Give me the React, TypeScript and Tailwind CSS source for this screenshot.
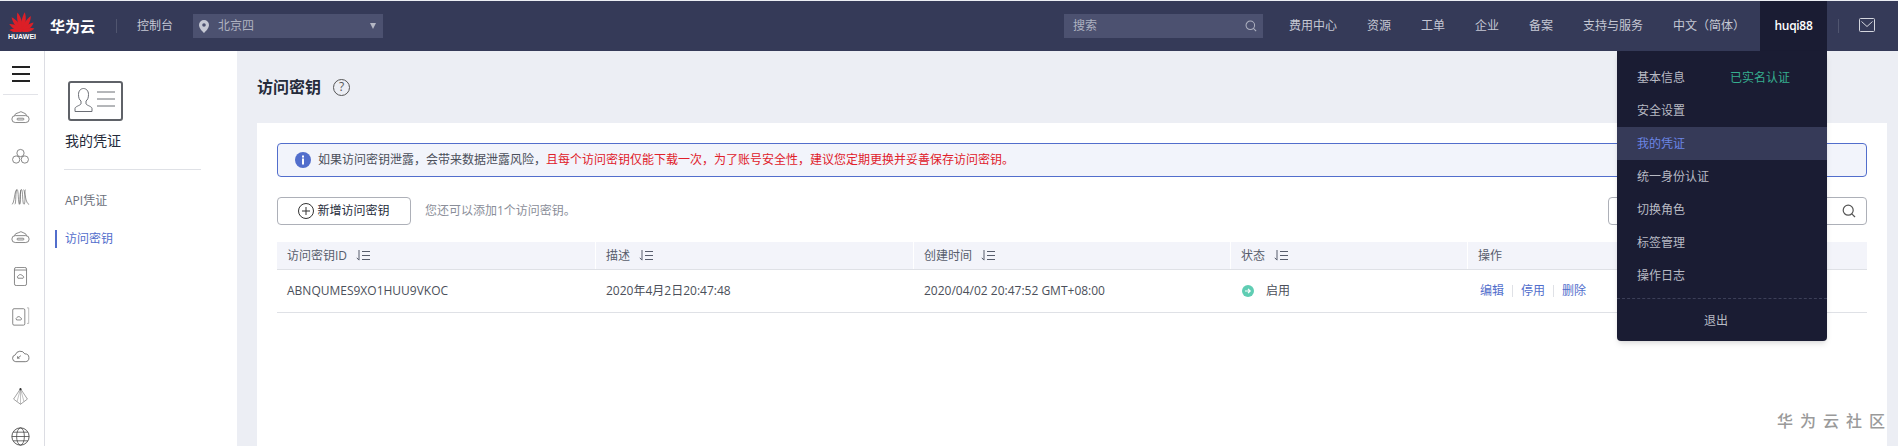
import React from "react";

const FONT = "font-['Open_Sans','Noto_Sans_CJK_SC',sans-serif]";

function HuaweiLogo() {
  const petals = [
    { a: -80, s: 0.85 },
    { a: -56, s: 0.98 },
    { a: -33, s: 1.18 },
    { a: -11, s: 1.3 },
    { a: 11, s: 1.3 },
    { a: 33, s: 1.18 },
    { a: 56, s: 0.98 },
    { a: 80, s: 0.85 },
  ];
  return (
    <svg width="26" height="21" viewBox="0 0 26 21">
      {petals.map((p) => (
        <path
          key={p.a}
          d="M0 0C-3 -4 -3.200 -10 -1 -15C2.200 -11 2.800 -4 0 0Z"
          fill="#dc1f27"
          transform={`translate(13 20.500) rotate(${p.a}) scale(${p.s > 1 ? 1 : p.s} ${p.s})`}
        />
      ))}
    </svg>
  );
}

function PinIcon() {
  return (
    <svg width="10" height="13" viewBox="0 0 10 13">
      <path
        d="M5 0a5 5 0 0 1 5 5c0 3-3 6-5 8-2-2-5-5-5-8a5 5 0 0 1 5-5zm0 3.200a1.800 1.800 0 1 0 0 3.600a1.800 1.800 0 0 0 0-3.600z"
        fill="#c5c8d4"
        fillRule="evenodd"
      />
    </svg>
  );
}

function SearchIcon({ color, size }: { color: string; size: number }) {
  return (
    <svg width={size} height={size} viewBox="0 0 14 14" fill="none" stroke={color} strokeWidth="1.2">
      <circle cx="6.200" cy="6.200" r="5" />
      <path d="M9.800 9.800L13 13" />
    </svg>
  );
}

function SortIcon() {
  return (
    <svg width="15" height="11" viewBox="0 0 15 11" fill="none" stroke="#575d6c" strokeWidth="1">
      <path d="M3 0v10M.8 7.800L3 10.200" />
      <path d="M6 1.500h8M6 5.500h8M6 9.500h8" />
    </svg>
  );
}

const cloud = "M5 15a4 4 0 0 1 -.5 -7.900a6 6 0 0 1 11 -1.100a4.500 4.500 0 0 1 .5 9z";

function RailIcon({ kind }: { kind: number }) {
  return (
    <svg width="19" height="19" viewBox="0 0 22 22" fill="none" stroke="#666" strokeWidth="0.9">
      {kind === 0 && (
        <g>
          <path d="M4 10a7 4 0 0 1 5-3.500a3.500 3 0 0 1 5 0a7 4 0 0 1 4 3.500" />
          <rect x="1" y="10" width="20" height="8" rx="4" />
          <rect x="7" y="13" width="8" height="2" rx="1" />
        </g>
      )}
      {kind === 1 && (
        <g>
          <circle cx="11" cy="7" r="4.200" />
          <circle cx="6" cy="14.500" r="4.200" />
          <circle cx="16" cy="14.500" r="4.200" />
        </g>
      )}
      {kind === 2 && (
        <path d="M1 20C4 20 4 3 7 3C9 3 8 20 10 20C11.500 20 10 3 12 3C14 3 13 20 15 20C17 20 16 3 14.500 3M7 3C5 3 6 20 4.500 20M12 3C10 3 11 20 9.500 20M17 3C15 3 17 20 21 20" strokeWidth="0.8" />
      )}
      {kind === 3 && (
        <g>
          <rect x="4" y="0.500" width="14" height="21" rx="2" />
          <path d="M4 3.500h14" />
          <path d="M8 13a2 2 0 0 1 .5 -3a3 3 0 0 1 5 .3a1.500 1.500 0 0 1 .5 2.700z" />
        </g>
      )}
      {kind === 4 && (
        <g>
          <rect x="2" y="2" width="14" height="19" rx="1.500" />
          <path d="M18.500 1h2v18h-2" stroke="#aaa" />
          <path d="M6.500 15a2 2 0 0 1 .5 -3a2.500 2.500 0 0 1 4 .3a1.500 1.500 0 0 1 .5 2.700z" />
        </g>
      )}
      {kind === 5 && (
        <g>
          <path d={cloud} transform="translate(0.500 2)" strokeWidth="1" />
          <path d="M7.500 13l4 -3M7.500 13l.3 -2.500M7.500 13h2.500" />
        </g>
      )}
      {kind === 6 && (
        <g>
          <path d="M11 2L3 14l8 6 8-6z" stroke="#888" />
          <path d="M11 2v18M11 2L7 17M11 2l4 15" strokeWidth="0.6" stroke="#888" />
          <circle cx="11" cy="2.500" r="1.200" fill="#333" stroke="none" />
        </g>
      )}
      {kind === 7 && (
        <g stroke="#444">
          <circle cx="11" cy="11" r="10" strokeWidth="1" />
          <ellipse cx="11" cy="11" rx="4.500" ry="10" />
          <path d="M1 11h20M2.500 6h17M2.500 16h17" />
        </g>
      )}
    </svg>
  );
}

function CardIcon() {
  return (
    <svg width="55" height="40" viewBox="0 0 55 40" fill="none">
      <rect x="1" y="1" width="53" height="38" rx="2" stroke="#5f6268" strokeWidth="2" />
      <path
        d="M7 30.500v-3c0-2 5-3 6-4.500v-3c-1.500-1-2.500-3-2.500-6.500c0-4 2.500-6 5-6s5 2 5 6c0 3.500-1 5.500-2.500 6.500v3c1 1.500 6 2.500 6 4.500v3z"
        stroke="#6b6e75"
        strokeWidth="1"
      />
      <path d="M29 11h18M29 18h18M29 25h18" stroke="#6b6e75" strokeWidth="1" />
    </svg>
  );
}

const navItems = ["费用中心", "资源", "工单", "企业", "备案", "支持与服务"];
const railKinds = [0, 1, 2, 0, 3, 4, 5, 6, 7];
const menuItems = ["安全设置", "我的凭证", "统一身份认证", "切换角色", "标签管理", "操作日志"];

const columns = [
  { title: "访问密钥ID", sort: true },
  { title: "描述", sort: true },
  { title: "创建时间", sort: true },
  { title: "状态", sort: true },
  { title: "操作", sort: false },
];

function TopBar() {
  return (
    <header className="h-[50px] shrink-0 bg-[#353a58] flex items-center text-xs text-[#c5c8d4]">
      <div className="w-[26px] ml-[9px] flex flex-col items-center">
        <HuaweiLogo />
        <span className="font-['Liberation_Sans',sans-serif] text-[7px] leading-[8px] font-bold text-white mt-px">
          HUAWEI
        </span>
      </div>
      <span className="ml-[15px] text-[15px] font-bold text-white">华为云</span>
      <span className="ml-[21px] h-[14px] w-px bg-[#50556f]" />
      <span className="ml-5">控制台</span>
      <div className="ml-5 w-[190px] h-[24px] bg-[#4c5170] flex items-center pl-[6px] pr-[7px] text-[#aeb1c0]">
        <PinIcon />
        <span className="ml-[9px] flex-1">北京四</span>
        <span className="w-0 h-0 border-x-[3.5px] border-x-transparent border-t-[6px] border-t-[#b4b7c4]" />
      </div>
      <div className="ml-auto w-[199px] h-[24px] bg-[#4c5170] flex items-center justify-between pl-[9px] pr-[6px] text-[#aeb1c0]">
        <span>搜索</span>
        <SearchIcon color="#aeb1c0" size={12} />
      </div>
      <nav className="ml-[26px] flex gap-[30px]">
        {navItems.map((n) => (
          <span key={n}>{n}</span>
        ))}
        <span className="w-[87px]">中文（简体）</span>
      </nav>
      <div className="w-[67px] h-[50px] bg-[#1a1c33] flex items-center justify-center text-white font-semibold tracking-[-0.3px]">
        huqi88
      </div>
      <span className="ml-[11px] w-px h-[14px] bg-[#50556f]" />
      <svg className="ml-5 -mt-[2px]" width="16" height="14" viewBox="0 0 16 14" fill="none" stroke="#d4d6de" strokeWidth="1">
        <rect x="0.500" y="0.500" width="15" height="13" rx="1" />
        <path d="M2.500 3.500L8 8.500l5.500-5" />
      </svg>
      <span className="w-[23px]" />
    </header>
  );
}

function UserMenu() {
  return (
    <div className="absolute left-[1617px] top-[51px] w-[210px] h-[290px] bg-[#1a1c33] rounded-b-sm shadow-md text-xs text-[#b8bac4] pt-[10px]">
      <div className="h-[33px] flex items-center pl-5">
        <span className="w-[93px]">基本信息</span>
        <span className="text-[#36ae8f]">已实名认证</span>
      </div>
      {menuItems.map((m) => (
        <div
          key={m}
          className={
            m === "我的凭证"
              ? "h-[33px] flex items-center pl-5 bg-[#363a58] text-[#6c86e6]"
              : "h-[33px] flex items-center pl-5"
          }
        >
          {m}
        </div>
      ))}
      <div className="mt-[6px] border-t border-dashed border-[#3c3f58] h-[44px] flex items-center pl-[87px]">退出</div>
    </div>
  );
}

function Sidebar() {
  return (
    <>
      <div className="w-[45px] shrink-0 bg-white border-r border-[#dcdde3] flex flex-col items-center">
        <div className="h-[46px] w-[35px] -ml-[3px] pt-[2px] border-b border-[#e2e3e8] flex flex-col items-center justify-center gap-[5px]">
          <span className="w-[18px] h-[2px] bg-[#222]" />
          <span className="w-[18px] h-[2px] bg-[#222]" />
          <span className="w-[18px] h-[2px] bg-[#222]" />
        </div>
        <div className="flex flex-col items-center gap-[21px] pt-3 -ml-[3px]">
          {railKinds.map((k, i) => (
            <RailIcon key={i} kind={k} />
          ))}
        </div>
      </div>
      <aside className="w-[192px] shrink-0 bg-white pt-[30px] pl-[19px] text-xs">
        <div className="w-[137px] border-b border-[#dfe1e6] h-[89px]">
          <div className="ml-[4px]">
            <CardIcon />
          </div>
          <div className="mt-[10px] text-sm leading-5 text-[#252b3a] ml-px">我的凭证</div>
        </div>
        <div className="mt-[21px] ml-px leading-5 text-[#6b6f7a]">API凭证</div>
        <div className="mt-[19px] -ml-[9px] pl-2 border-l-2 border-[#526ecc] leading-[18px] text-[#526ecc]">访问密钥</div>
      </aside>
    </>
  );
}

function KeyTable() {
  return (
    <div className="mt-[17px] text-xs">
      <div className="grid grid-cols-[319px_318px_317px_237px_399px] h-[28px] bg-[#f3f4fa] border-b border-[#dfe1e6] text-[#575d6c]">
        {columns.map((c) => (
          <div key={c.title} className="flex items-center gap-[9px] pl-[10px] border-r border-white last:border-r-0">
            <span>{c.title}</span>
            {c.sort && <SortIcon />}
          </div>
        ))}
      </div>
      <div className="grid grid-cols-[319px_318px_317px_237px_399px] h-[43px] items-center border-b border-[#dfe1e6] text-[#4b4f5a]">
        <div className="pl-[10px]">ABNQUMES9XO1HUU9VKOC</div>
        <div className="pl-[10px]">2020年4月2日20:47:48</div>
        <div className="pl-[10px]">2020/04/02 20:47:52 GMT+08:00</div>
        <div className="pl-[11px] flex items-center gap-3">
          <svg width="12" height="12" viewBox="0 0 12 12">
            <circle cx="6" cy="6" r="6" fill="#5fcdb3" />
            <path d="M3 6h5M6 3.800L8.200 6 6 8.200" stroke="#fff" strokeWidth="1.200" fill="none" />
          </svg>
          <span>启用</span>
        </div>
        <div className="pl-3 flex items-center text-[#526ecc]">
          <span>编辑</span>
          <span className="mx-2 w-px h-3 bg-[#dfe1e6]" />
          <span>停用</span>
          <span className="mx-2 w-px h-3 bg-[#dfe1e6]" />
          <span>删除</span>
        </div>
      </div>
    </div>
  );
}

export default function App() {
  return (
    <div className={`relative h-[446px] w-[1898px] overflow-hidden bg-[#eceef4] pt-px flex flex-col ${FONT}`}>
      <TopBar />
      <div className="flex flex-1 min-h-0">
        <Sidebar />
        <main className="flex-1 pl-5 pr-[11px]">
          <div className="h-[72px] flex items-center gap-3">
            <h1 className="text-base font-bold text-[#252b3a]">访问密钥</h1>
            <span className="w-[17px] h-[17px] rounded-full border border-[#555] flex items-center justify-center text-xs leading-none text-[#555]">
              ?
            </span>
          </div>
          <section className="bg-white h-[330px] p-5">
            <div className="h-[34px] border border-[#526ecc] rounded-sm bg-[#f2f4fb] flex items-center pl-[17px] text-xs text-[#4b4f5a]">
              <svg width="16" height="16" viewBox="0 0 16 16">
                <circle cx="8" cy="8" r="8" fill="#526ecc" />
                <rect x="7" y="6.500" width="2" height="6" fill="#fff" />
                <rect x="7" y="3.500" width="2" height="2" fill="#fff" />
              </svg>
              <span className="ml-[7px]">如果访问密钥泄露，会带来数据泄露风险，</span>
              <span className="text-[#e0202a]">且每个访问密钥仅能下载一次，为了账号安全性，建议您定期更换并妥善保存访问密钥。</span>
            </div>
            <div className="mt-5 h-7 flex items-center text-xs">
              <button className="w-[134px] h-7 border border-[#adb0b8] rounded-sm bg-white flex items-center justify-center gap-[3px] text-[#252b3a]">
                <svg width="16" height="16" viewBox="0 0 16 16" fill="none" stroke="#333" strokeWidth="1">
                  <circle cx="8" cy="8" r="7.500" />
                  <path d="M4 8h8M8 4v8" />
                </svg>
                新增访问密钥
              </button>
              <span className="ml-[14px] text-[#8a8e99]">您还可以添加1个访问密钥。</span>
              <div className="ml-auto w-[259px] h-7 border border-[#adb0b8] rounded-sm flex items-center justify-end pr-[10px]">
                <SearchIcon color="#555" size={14} />
              </div>
            </div>
            <KeyTable />
          </section>
        </main>
      </div>
      <UserMenu />
      <span className="absolute left-[1777px] top-[410px] text-base leading-[22px] tracking-[7px] font-medium text-[#9a9a9a]">
        华为云社区
      </span>
    </div>
  );
}
